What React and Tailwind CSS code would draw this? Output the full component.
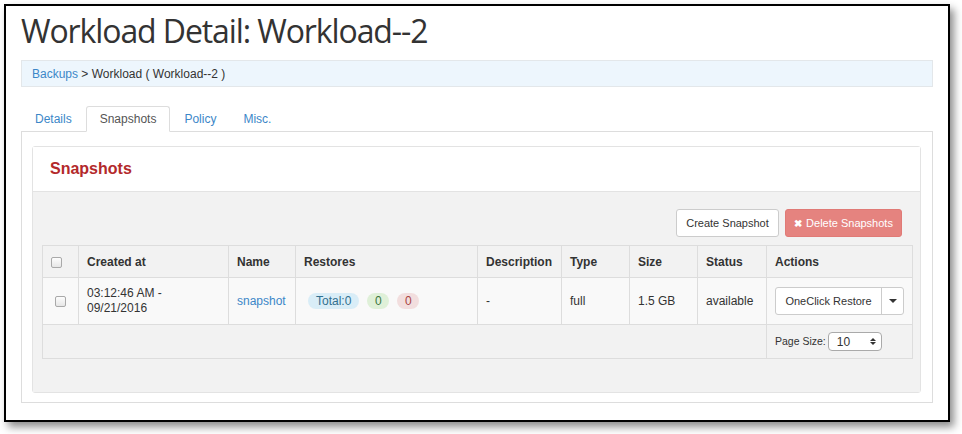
import React from "react";

const Check = () => (
  <span className="inline-block w-[11px] h-[11px] rounded-[2px] border border-[#a9a9a9] bg-gradient-to-b from-[#fdfdfd] to-[#e6e6e6] align-middle" />
);

export default function App() {
  const th = "border border-[#dddddd] px-[8px] text-left font-bold text-[12px] text-[#333]";
  const td = "border border-[#dddddd] px-[8px] text-[12px] text-[#333]";
  return (
    <div className="w-[962px] h-[434px] bg-white overflow-hidden" style={{ fontFamily: '"Liberation Sans", Arial, sans-serif' }}>
      <div className="ml-[4px] mt-[4px] w-[946px] h-[418px] border-2 border-black bg-white shadow-[4px_5px_8px_rgba(0,0,0,0.45)] px-[15px]">
        <h1 className="text-[32px] leading-[40px] pt-[5px] tracking-[-1.1px] text-[#333] font-normal" style={{ fontFamily: '"Open Sans", sans-serif' }}>
          Workload Detail: Workload--2
        </h1>
        <div className="mt-[9px] h-[27px] border border-[#e3e7ea] bg-[#edf6fd] flex items-center pl-[10px] text-[12px] text-[#333]">
          <span className="text-[#3c87c8]">Backups</span>
          <span>&nbsp;&gt; Workload ( Workload--2 )</span>
        </div>
        <div className="mt-[19px] flex items-end h-[25px] text-[12px]">
          <div className="px-[14px] h-[25px] flex items-center text-[#3c87c8]">Details</div>
          <div className="px-[13px] h-[26px] mb-[-1px] flex items-center text-[#555] bg-white border border-[#dddddd] border-b-white rounded-t-[3px] relative z-10">Snapshots</div>
          <div className="pl-[14px] pr-[13px] h-[25px] flex items-center text-[#3c87c8]">Policy</div>
          <div className="px-[14px] h-[25px] flex items-center text-[#3c87c8]">Misc.</div>
        </div>
        <div className="border border-[#dddddd] h-[272px] pt-[14px] pl-[10px] pr-[11px]">
          <div className="border border-[#e3e3e3] rounded-[3px] h-[247px] flex flex-col">
            <div className="h-[45px] bg-white border-b border-[#e3e3e3] flex items-center pl-[17px] text-[16px] font-bold text-[#b3292b]">
              Snapshots
            </div>
            <div className="flex-1 bg-[#f2f2f2] pt-[17px] px-[9px]">
              <div className="flex justify-end gap-[6px] pr-[9px]">
                <div className="h-[28px] w-[103px] bg-white border border-[#cccccc] rounded-[3px] flex items-center justify-center text-[11px] text-[#333]">
                  Create Snapshot
                </div>
                <div className="h-[28px] w-[117px] bg-[#e5837f] border border-[#e07a76] rounded-[3px] flex items-center justify-center text-[11px] text-white">
                  <span className="text-[10px] font-bold mr-[4px]">✖</span>Delete Snapshots
                </div>
              </div>
              <table className="mt-[8px] w-[870px] table-fixed border-collapse">
                <colgroup>
                  <col className="w-[36px]" />
                  <col className="w-[150px]" />
                  <col className="w-[67px]" />
                  <col className="w-[182px]" />
                  <col className="w-[84px]" />
                  <col className="w-[68px]" />
                  <col className="w-[68px]" />
                  <col className="w-[69px]" />
                  <col className="w-[146px]" />
                </colgroup>
                <thead>
                  <tr className="h-[32px] bg-[#f2f2f2]">
                    <th className={th + " text-center"}><Check /></th>
                    <th className={th}>Created at</th>
                    <th className={th}>Name</th>
                    <th className={th}>Restores</th>
                    <th className={th}>Description</th>
                    <th className={th}>Type</th>
                    <th className={th}>Size</th>
                    <th className={th}>Status</th>
                    <th className={th}>Actions</th>
                  </tr>
                </thead>
                <tbody>
                  <tr className="h-[47px] bg-[#f9f9f9]">
                    <td className={td + " text-center"}><Check /></td>
                    <td className={td + " leading-[15px]"}>03:12:46 AM -<br />09/21/2016</td>
                    <td className={td}><span className="text-[#3c87c8]">snapshot</span></td>
                    <td className={td + " pl-[12px]"}>
                      <div className="flex gap-[8px] items-center">
                        <span className="h-[16px] px-[8px] rounded-full bg-[#d9edf7] text-[#31708f] flex items-center">Total:0</span>
                        <span className="h-[16px] w-[22px] rounded-full bg-[#dff0d8] text-[#3c763d] flex items-center justify-center">0</span>
                        <span className="h-[16px] w-[22px] rounded-full bg-[#f2dede] text-[#a94442] flex items-center justify-center">0</span>
                      </div>
                    </td>
                    <td className={td}>-</td>
                    <td className={td}>full</td>
                    <td className={td}>1.5 GB</td>
                    <td className={td}>available</td>
                    <td className={td}>
                      <div className="flex h-[28px] w-[129px] bg-white border border-[#cccccc] rounded-[3px] text-[11px]">
                        <div className="w-[106px] flex items-center justify-center border-r border-[#cccccc]">OneClick Restore</div>
                        <div className="flex-1 flex items-center justify-center">
                          <span className="w-0 h-0 border-l-[4px] border-r-[4px] border-t-[4px] border-l-transparent border-r-transparent border-t-[#333]" />
                        </div>
                      </div>
                    </td>
                  </tr>
                  <tr className="h-[34px] bg-[#f2f2f2]">
                    <td className="border border-[#dddddd]" colSpan={8}></td>
                    <td className="border border-[#dddddd] pl-[8px] pr-[4px] text-[10.5px] text-[#333]">
                      <div className="flex items-center gap-[2px]">
                        <span>Page Size:</span>
                        <div className="w-[54px] h-[19px] border border-[#aaaaaa] rounded-[4px] bg-white flex items-center justify-between pl-[8px] pr-[5px] text-[12px]">
                          <span>10</span>
                          <span className="flex flex-col gap-[1px]">
                            <span className="w-0 h-0 border-l-[3px] border-r-[3px] border-b-[3px] border-l-transparent border-r-transparent border-b-[#333]" />
                            <span className="w-0 h-0 border-l-[3px] border-r-[3px] border-t-[3px] border-l-transparent border-r-transparent border-t-[#333]" />
                          </span>
                        </div>
                      </div>
                    </td>
                  </tr>
                </tbody>
              </table>
            </div>
          </div>
        </div>
      </div>
    </div>
  );
}
